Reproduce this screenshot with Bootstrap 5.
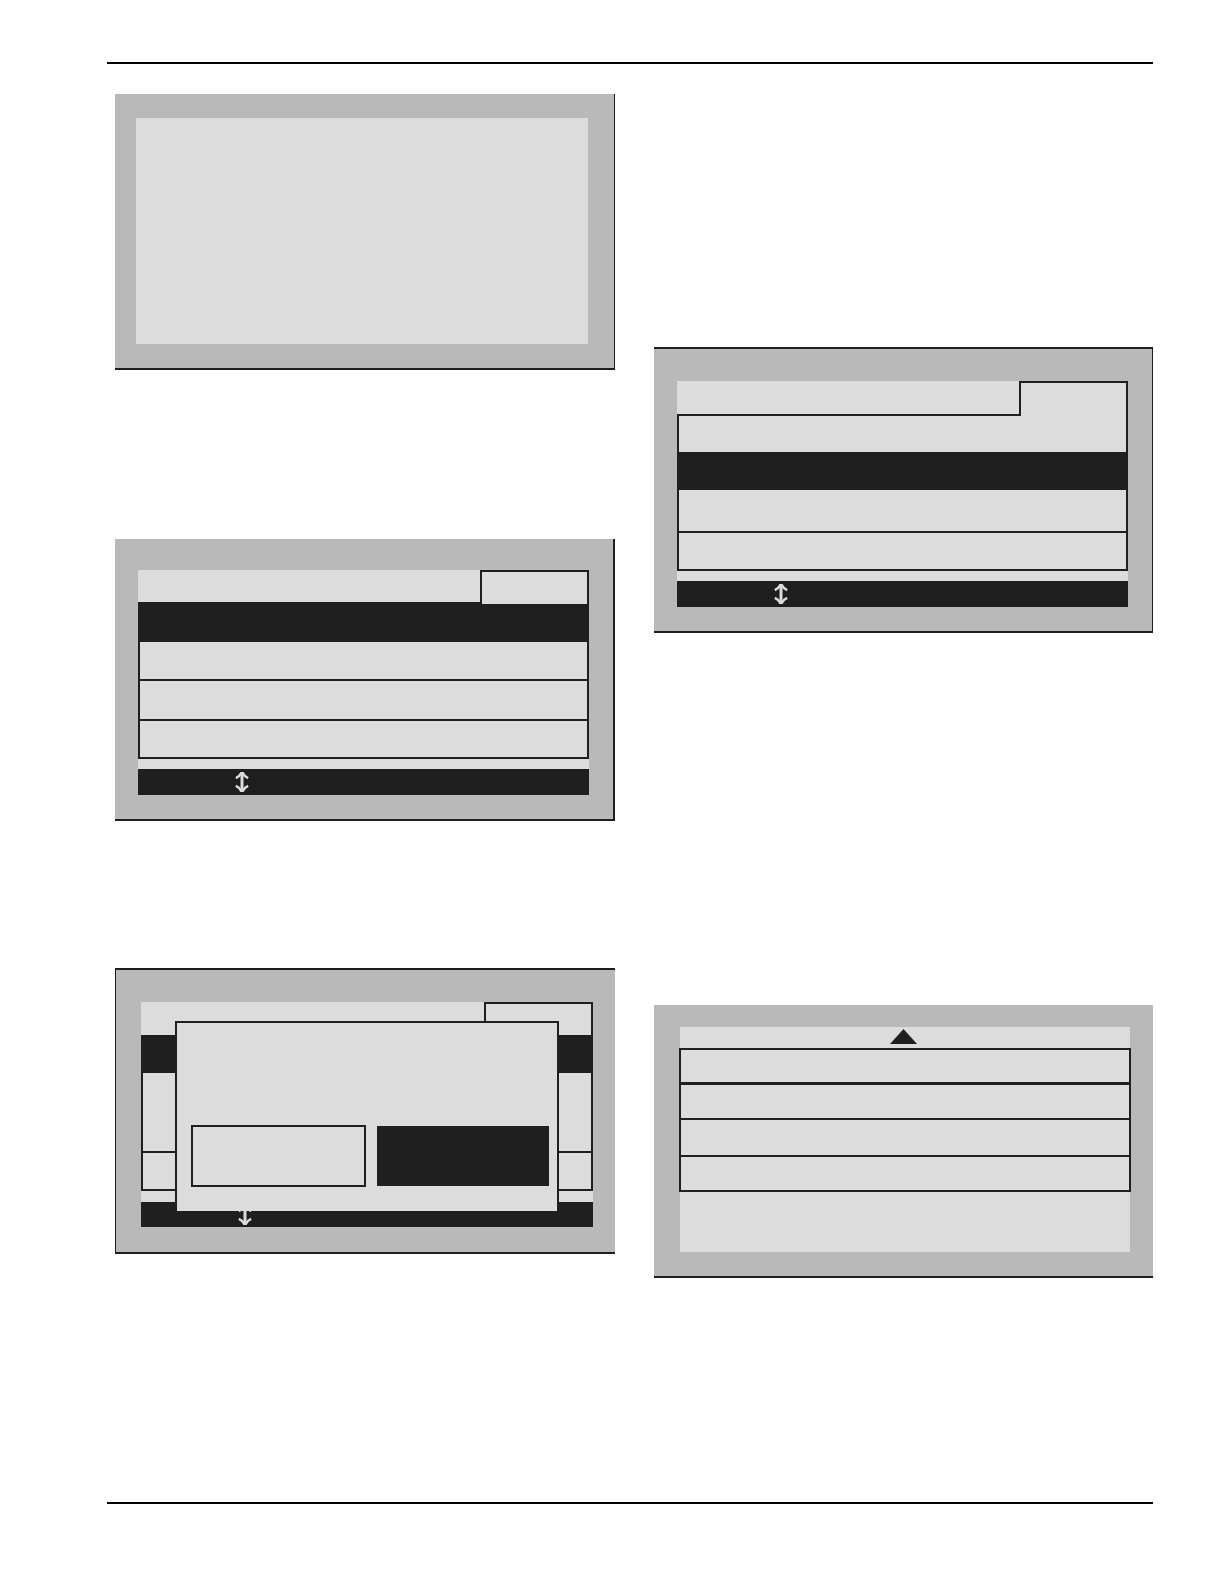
<!DOCTYPE html>
<html lang="en">
<head>
<meta charset="utf-8">
<meta name="viewport" content="width=device-width, initial-scale=1">
<title>Display screens</title>
<link href="https://cdn.jsdelivr.net/npm/bootstrap@5.3.0/dist/css/bootstrap.min.css" rel="stylesheet">
<script src="https://cdn.jsdelivr.net/npm/bootstrap@5.3.0/dist/js/bootstrap.bundle.min.js"></script>
<style>
  :root { --ink: #1f1f1f; --bezel: #b9b9b9; --glass: #dcdcdc; }
  body { font-family: "Liberation Sans", Arial, sans-serif; background: #fff; }
  .sheet { padding: 62px 71px 80px 107px; }
  .sheet-rule { height: 2px; border: 0; background: #000; opacity: 1; }
  .screens { display: grid; grid-template-columns: 500fr 499fr; column-gap: 39px; padding: 30px 0 224px 8px; }
  .screens-end { padding-top: 253px; }

  /* Bezel of each display */
  .lcd { background: var(--bezel); border: 0 solid var(--ink); border-bottom-width: 2px; }
  .lcd-blank { padding: 24px 26px 24px 21px; border-right-width: 1px; }
  .lcd-menu { padding: 31px 24px 24px 23px; border-right-width: 2px; }
  .lcd-framed { padding-top: 32px; border-top-width: 2px; border-right-width: 1px; }
  .lcd-dialog { padding: 32px 22px 25px 25px; border-width: 2px 0 2px 1px; }
  .lcd-list { padding: 22px 23px 24px 26px; }
  .gap-first { margin-top: 169px; }
  .gap-second { margin-top: 147px; }
  .gap-wide { margin-top: 372px; }

  .glass { background: var(--glass); }
  .glass-blank { min-height: 226px; }

  /* Title strip with the raised tab */
  .strip { min-height: 34px; }
  .lcd-framed .strip { min-height: 35px; }
  .lcd-dialog .strip { min-height: 33px; }
  .strip-title { border-bottom: 2px solid var(--ink); }
  .lcd-dialog .strip-title { border-bottom: 0; }
  .strip-tab { width: 109px; border: 2px solid var(--ink); border-bottom: 0; }

  .menu-list { --bs-list-group-bg: var(--glass); border: 2px solid var(--ink); border-top: 0; }
  .menu-list .list-group-item { padding: 0; border: 0; min-height: 38px; }
  .menu-list .list-group-item + .list-group-item { border-top: 2px solid var(--ink); }
  .menu-list .list-group-item.picked { background: var(--ink); border-top: 0; }
  .menu-list .list-group-item.picked + .list-group-item { border-top: 0; }
  .menu-list .h-36 { min-height: 36px; }
  .menu-list .h-37 { min-height: 37px; }
  .menu-list .h-38 { min-height: 38px; }
  .menu-list .h-40 { min-height: 40px; }
  .menu-list .h-41 { min-height: 41px; }
  .menu-list .h-78 { min-height: 78px; }

  .keybar { min-height: 26px; margin-top: 10px; padding-left: 97px; background: var(--ink); }
  .lcd-dialog .keybar { min-height: 25px; margin-top: 11px; }
  .keybar svg { width: 14px; height: 20px; }

  /* Confirmation box that lies over the menu */
  .ask { inset: 19px 34px 16px; border: 2px solid var(--ink); border-bottom: 0; padding: 0 8px 24px 14px; gap: 11px; }
  .ask .btn { border-radius: 0; border: 2px solid var(--ink); min-height: 62px; background: var(--glass); }
  .ask .btn-picked { flex: 0 0 172px; min-height: 60px; margin-bottom: 1px; background: var(--ink); }

  .scroll-up { height: 21px; }
  .scroll-up svg { width: 27px; height: 15px; }
  .wide-list { margin: 0 -1px 60px; border-top: 2px solid var(--ink); }
  .wide-list .list-group-item { min-height: 35px; }
  .wide-list .list-group-item:first-child { min-height: 32px; }
  .wide-list .list-group-item:nth-child(2) { min-height: 36px; border-top-width: 3px; }
  .wide-list .list-group-item:nth-child(3) { min-height: 37px; }

  @media (max-width: 900px) {
    .sheet { padding-left: 24px; padding-right: 24px; }
    .screens { grid-template-columns: 1fr; padding-left: 0; }
  }
</style>
</head>
<body>
<div class="sheet">
  <hr class="sheet-rule m-0">
  <main class="screens">
    <div>
      <section class="lcd lcd-blank" aria-label="Blank screen">
        <div class="glass glass-blank"></div>
      </section>

      <section class="lcd lcd-menu gap-first" aria-label="Menu, first item selected">
        <div class="glass">
          <div class="strip d-flex">
            <div class="strip-title flex-grow-1"></div>
            <div class="strip-tab"></div>
          </div>
          <ul class="menu-list list-group rounded-0">
            <li class="list-group-item picked"></li>
            <li class="list-group-item h-37"></li>
            <li class="list-group-item h-40"></li>
            <li class="list-group-item h-38"></li>
          </ul>
          <div class="keybar d-flex align-items-center">
            <svg viewBox="0 0 14 20" fill="none" stroke="#dcdcdc" stroke-width="2.400" aria-hidden="true"><path d="M7 1.500V18.500" stroke-width="3"/><path d="M.8 6.200C2.500 5.500 5 3.500 6 1.300H8C9 3.500 11.500 5.500 13.200 6.200M.8 13.800C2.500 14.500 5 16.500 6 18.700H8C9 16.500 11.500 14.500 13.200 13.800"/></svg>
          </div>
        </div>
      </section>

      <section class="lcd lcd-dialog gap-second" aria-label="Menu with confirmation">
        <div class="glass position-relative">
          <div class="strip d-flex">
            <div class="strip-title flex-grow-1"></div>
            <div class="strip-tab"></div>
          </div>
          <ul class="menu-list list-group rounded-0">
            <li class="list-group-item picked"></li>
            <li class="list-group-item h-78"></li>
            <li class="list-group-item h-38"></li>
          </ul>
          <div class="keybar d-flex align-items-center">
            <svg viewBox="0 0 14 20" fill="none" stroke="#dcdcdc" stroke-width="2.400" aria-hidden="true"><path d="M7 1.500V18.500" stroke-width="3"/><path d="M.8 6.200C2.500 5.500 5 3.500 6 1.300H8C9 3.500 11.500 5.500 13.200 6.200M.8 13.800C2.500 14.500 5 16.500 6 18.700H8C9 16.500 11.500 14.500 13.200 13.800"/></svg>
          </div>
          <div class="ask glass position-absolute d-flex align-items-end" role="dialog" aria-label="Confirmation">
            <button type="button" class="btn flex-grow-1" aria-label="Left choice"></button>
            <button type="button" class="btn btn-picked" aria-label="Right choice"></button>
          </div>
        </div>
      </section>
    </div>

    <div class="screens-end">
      <section class="lcd lcd-menu lcd-framed" aria-label="Menu, second item selected">
        <div class="glass">
          <div class="strip d-flex">
            <div class="strip-title flex-grow-1"></div>
            <div class="strip-tab"></div>
          </div>
          <ul class="menu-list list-group rounded-0">
            <li class="list-group-item h-36"></li>
            <li class="list-group-item picked"></li>
            <li class="list-group-item h-41"></li>
            <li class="list-group-item h-38"></li>
          </ul>
          <div class="keybar d-flex align-items-center">
            <svg viewBox="0 0 14 20" fill="none" stroke="#dcdcdc" stroke-width="2.400" aria-hidden="true"><path d="M7 1.500V18.500" stroke-width="3"/><path d="M.8 6.200C2.500 5.500 5 3.500 6 1.300H8C9 3.500 11.500 5.500 13.200 6.200M.8 13.800C2.500 14.500 5 16.500 6 18.700H8C9 16.500 11.500 14.500 13.200 13.800"/></svg>
          </div>
        </div>
      </section>

      <section class="lcd lcd-list gap-wide" aria-label="End of list">
        <div class="glass d-flex flex-column">
          <div class="scroll-up d-flex justify-content-center align-items-start pt-0 pe-1">
            <svg class="mt-auto mb-1" viewBox="0 0 27 15" fill="#1f1f1f" aria-hidden="true"><path d="M13.500 0L27 15H0Z"/></svg>
          </div>
          <ul class="menu-list wide-list list-group rounded-0">
            <li class="list-group-item"></li>
            <li class="list-group-item"></li>
            <li class="list-group-item"></li>
            <li class="list-group-item"></li>
          </ul>
        </div>
      </section>
    </div>
  </main>
  <hr class="sheet-rule m-0">
</div>
</body>
</html>
